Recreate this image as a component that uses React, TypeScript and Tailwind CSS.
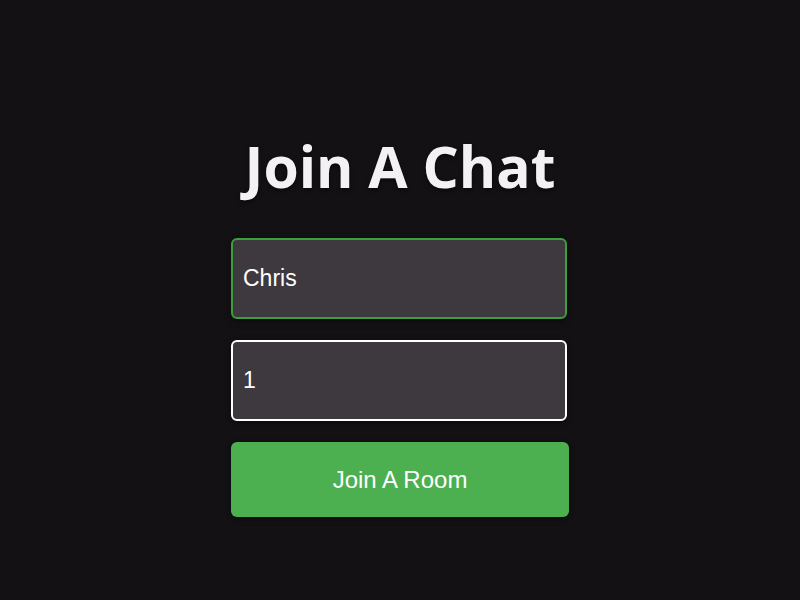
import { useState } from 'react';

export default function App() {
  const [name, setName] = useState('Chris');
  const [room, setRoom] = useState('1');

  return (
    <div className="min-h-screen bg-[#141114] flex flex-col items-center pt-[132px]">
      <h1 className="text-[57px] leading-[1.2] font-bold text-[#f3f1f3] font-['Open_Sans',sans-serif] [text-shadow:0_2px_4px_rgba(0,0,0,0.6)]">
        Join A Chat
      </h1>

      <form onSubmit={(e) => e.preventDefault()} className="w-[338px] mt-[38px] flex flex-col gap-[21px]">
        <input
          type="text"
          value={name}
          onChange={(e) => setName(e.target.value)}
          className="w-[336px] h-[81px] px-[10px] rounded-[6px] border-2 border-[#3a9f3e] bg-[#3d393e] text-white text-[23px] font-['Liberation_Sans',Arial,sans-serif] outline-none shadow-[0_2px_6px_rgba(0,0,0,0.5)]"
        />
        <input
          type="text"
          value={room}
          onChange={(e) => setRoom(e.target.value)}
          className="w-[336px] h-[81px] px-[10px] rounded-[6px] border-2 border-white bg-[#3d393e] text-white text-[23px] font-['Liberation_Sans',Arial,sans-serif] outline-none shadow-[0_2px_6px_rgba(0,0,0,0.5)]"
        />
        <button
          type="submit"
          className="w-[338px] h-[75px] rounded-[6px] bg-[#4caf50] text-white text-[24px] font-['Liberation_Sans',Arial,sans-serif] shadow-[0_2px_6px_rgba(0,0,0,0.4)]"
        >
          Join A Room
        </button>
      </form>
    </div>
  );
}
